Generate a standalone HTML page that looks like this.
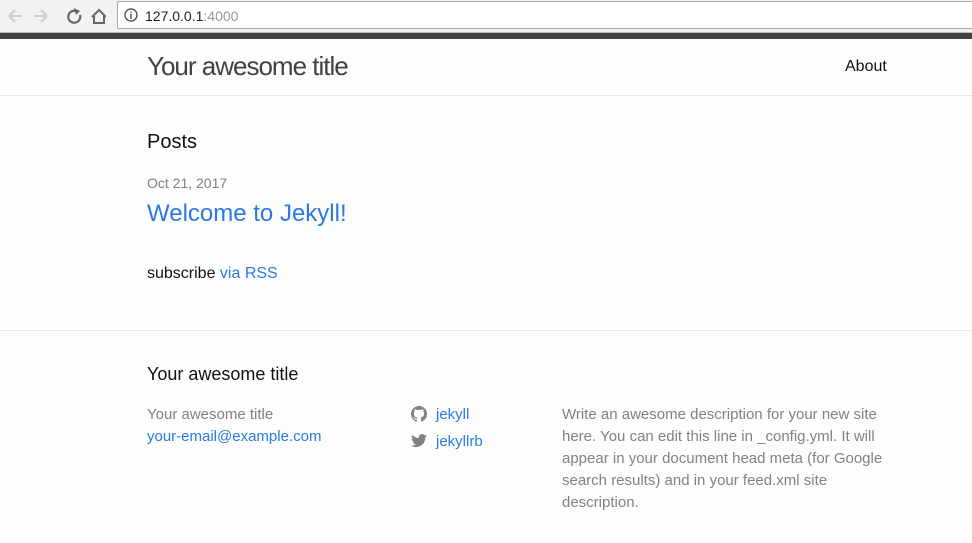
<!DOCTYPE html>
<html><head><meta charset="utf-8"><style>
*{margin:0;padding:0;box-sizing:border-box}
body{width:972px;height:543px;overflow:hidden;background:#fdfdfd;font-family:"Liberation Sans",sans-serif;position:relative}
.chrome{position:absolute;left:0;top:0;width:972px;height:33px;background:#f2f2f2;border-bottom:1px solid #bbb}
.addr{position:absolute;left:117px;top:1px;width:860px;height:28px;background:#fff;border:1px solid #aaa;border-radius:2px}
.addr span{position:absolute;left:27px;top:6px;font-size:14px;color:#222}
.dark{position:absolute;left:0;top:33px;width:972px;height:6px;background:#424242}
.hdr{position:absolute;left:0;top:39px;width:972px;height:57px;border-bottom:1px solid #e8e8e8}
.a{position:absolute;white-space:nowrap}
a,.l{color:#2a7ae2;text-decoration:none}
.ft{position:absolute;left:0;top:330px;width:972px;border-top:1px solid #e8e8e8}
</style></head><body>
<div class="chrome">
<svg class="a" style="left:6px;top:7px" width="100" height="18" viewBox="0 0 100 18">
<path d="M3 9h13M3 9l6-6M3 9l6 6" stroke="#ccc" stroke-width="2" fill="none"/>
<path d="M28 9h13M41 9l-6-6M41 9l-6 6" stroke="#ccc" stroke-width="2" fill="none"/>
<path d="M70 4a6 6 0 1 0 4 4" stroke="#666" stroke-width="2.2" fill="none"/><path d="M68 1l6 3-4 4z" fill="#666"/>
<path d="M86 10l7-7 7 7M88 9v7h10v-7" stroke="#666" stroke-width="2" fill="none"/>
</svg>
<div class="addr"><svg class="a" style="left:6px;top:6px" width="14" height="14"><circle cx="7" cy="7" r="6" stroke="#555" stroke-width="1.4" fill="none"/><path d="M7 6v5M7 3.5v1.3" stroke="#555" stroke-width="1.5"/></svg><span>127.0.0.1<span style="position:static;color:#999">:4000</span></span></div>
</div>
<div class="dark"></div>
<div class="hdr">
<div class="a" style="left:147px;top:12px;font-size:26px;color:#424242;letter-spacing:-1px">Your awesome title</div>
<div class="a" style="left:845px;top:19px;font-size:16px;color:#111">About</div>
</div>
<div class="a" style="left:147px;top:131px;font-size:20px;color:#111">Posts</div>
<div class="a" style="left:147px;top:175px;font-size:14px;color:#828282">Oct 21, 2017</div>
<div class="a l" style="left:147px;top:200px;font-size:24px">Welcome to Jekyll!</div>
<div class="a" style="left:147px;top:265px;font-size:16px;color:#111">subscribe <span class="l">via RSS</span></div>
<div class="ft"></div>
<div class="a" style="left:147px;top:364px;font-size:18px;color:#111">Your awesome title</div>
<div class="a" style="left:147px;top:404px;font-size:15px;color:#828282;line-height:22px">Your awesome title<br><span class="l">your-email@example.com</span></div>
<svg class="a" style="left:411px;top:406px" width="16" height="16" viewBox="0 0 16 16"><path fill="#828282" d="M8 0C3.6 0 0 3.6 0 8c0 3.5 2.3 6.5 5.5 7.6.4.1.5-.2.5-.4v-1.4c-2.2.5-2.7-1-2.7-1-.4-.9-.9-1.200-.9-1.2-.7-.5.1-.5.1-.5.8.1 1.2.8 1.2.8.7 1.2 1.9.9 2.3.7.1-.5.3-.9.5-1.1-1.8-.2-3.6-.9-3.6-4 0-.9.3-1.6.8-2.1-.1-.2-.4-1 .1-2.1 0 0 .7-.2 2.2.8.6-.2 1.3-.3 2-.3s1.4.1 2 .3c1.5-1 2.2-.8 2.2-.8.4 1.1.2 1.9.1 2.1.5.6.8 1.3.8 2.1 0 3.1-1.9 3.7-3.6 3.9.3.3.5.8.5 1.5v2.2c0 .2.1.5.6.4C13.7 14.5 16 11.5 16 8c0-4.4-3.6-8-8-8z"/></svg>
<svg class="a" style="left:411px;top:434px" width="16" height="14" viewBox="0 0 16 14"><path fill="#828282" d="M16 1.7c-.6.3-1.2.4-1.9.5.7-.4 1.2-1 1.4-1.8-.6.4-1.3.6-2.1.8C12.8.5 12 .1 11 .1 9.2.1 7.700 1.6 7.7 3.4c0 .3 0 .5.1.7C5.1 4 2.7 2.7 1.1.7.8 1.2.7 1.8.7 2.4c0 1.1.6 2.1 1.5 2.7-.5 0-1-.2-1.5-.4 0 1.6 1.1 2.9 2.6 3.2-.3.1-.6.1-.9.1-.2 0-.4 0-.6-.1.4 1.3 1.6 2.3 3.1 2.3-1.1.9-2.5 1.4-4.1 1.4H0c1.5.9 3.2 1.5 5 1.5 6 0 9.3-5 9.3-9.3v-.4c.7-.5 1.2-1.1 1.7-1.7z"/></svg>
<div class="a l" style="left:436px;top:401px;font-size:15px;line-height:27px">jekyll<br>jekyllrb</div>
<div class="a" style="left:562px;top:404px;font-size:15px;color:#828282;line-height:22px;white-space:normal;width:330px">Write an awesome description for your new site here. You can edit this line in _config.yml. It will appear in your document head meta (for Google search results) and in your feed.xml site description.</div>
</body></html>
